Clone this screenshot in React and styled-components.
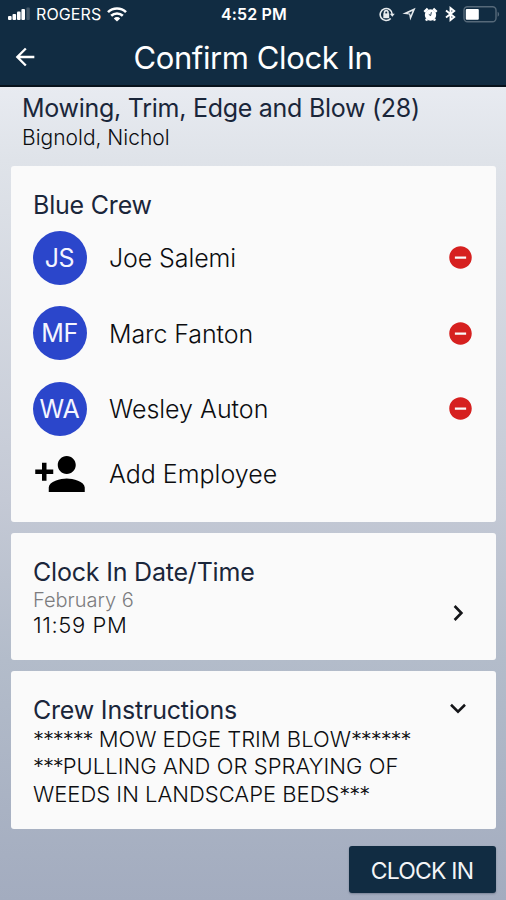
import React from "react";
import styled, { createGlobalStyle } from "styled-components";
import { MdArrowBack, MdPersonAdd, MdRemoveCircle } from "react-icons/md";

const GlobalStyle = createGlobalStyle`
  * {
    box-sizing: border-box;
  }
  body {
    margin: 0;
    font-family: Inter, "Liberation Sans", sans-serif;
  }
  h1, h2, p {
    margin: 0;
    font-weight: 400;
  }
`;

const Screen = styled.div`
  display: flex;
  flex-direction: column;
  height: 900px;
  overflow: hidden;
  background: linear-gradient(180deg, #e8ebf1 86px, #dfe3e9 160px, #c4c9d5 500px, #b3bcca 660px, #a3acbf 900px);
`;

const Header = styled.header`
  height: 87px;
  background-color: #112c42;
  border-bottom: 2px solid #07121c;
  color: #fff;
`;

const StatusBar = styled.div`
  display: grid;
  grid-template-columns: 1fr auto 1fr;
  align-items: center;
  height: 28px;
  padding: 0 6px 0 8px;
`;

const StatusGroup = styled.div`
  display: flex;
  align-items: center;
  justify-content: ${(props) => (props.$end ? "flex-end" : "flex-start")};
  gap: ${(props) => props.$gap};
`;

const StatusText = styled.span`
  font-size: 16px;
  line-height: 28px;
  font-weight: ${(props) => (props.$bold ? 600 : 400)};
  letter-spacing: ${(props) => props.$spacing || "0"};
  white-space: nowrap;
`;

const NavBar = styled.div`
  display: grid;
  grid-template-columns: 50px 1fr 50px;
  align-items: center;
  height: 58px;
`;

const BackButton = styled.button`
  display: flex;
  padding: 0 0 0 11px;
  border: 0;
  background: none;
  color: #fff;
  font-size: 28px;
`;

const PageTitle = styled.h1`
  padding-top: 2px;
  font-size: 31px;
  line-height: 40px;
  letter-spacing: -0.4px;
  text-align: center;
  white-space: nowrap;
`;

const Job = styled.div`
  height: 79px;
  padding: 6px 22px 0;
`;

const Heading = styled.h2`
  font-size: 25px;
  line-height: 31px;
  color: #1a263a;
  letter-spacing: ${(props) => props.$spacing || "-0.2px"};
  white-space: nowrap;
`;

const Line = styled.p`
  font-size: ${(props) => props.$size || "21px"};
  line-height: ${(props) => props.$height || "27px"};
  font-weight: 350;
  color: ${(props) => props.$color || "#0c0d10"};
  letter-spacing: ${(props) => props.$spacing || "0"};
  white-space: nowrap;
`;

const Stars = styled.span`
  letter-spacing: -1.1px;
`;

const Cards = styled.main`
  display: flex;
  flex-direction: column;
  gap: 11px;
  padding: 0 10px 0 11px;
`;

const Card = styled.section`
  height: ${(props) => props.$height};
  padding: 24px 22px 0;
  border-radius: 3px;
  background-color: #fafafa;
`;

const Row = styled.div`
  display: flex;
  align-items: center;
  height: ${(props) => props.$height || "75.5px"};
`;

const Crew = styled.div`
  margin-top: -1px;
`;

const Avatar = styled.div`
  width: 54px;
  height: 54px;
  padding-right: 1px;
  border-radius: 50%;
  background-color: #2b46cb;
  color: #f4f5ff;
  font-size: 25px;
  line-height: 55px;
  text-align: center;
  letter-spacing: -0.3px;
`;

const Name = styled.span`
  flex: 1;
  padding: 2px 0 0 22px;
  font-size: 25px;
  line-height: 31px;
  font-weight: 350;
  color: #0c0d10;
  letter-spacing: ${(props) => props.$spacing || "0"};
`;

const RemoveButton = styled.button`
  display: flex;
  padding: 0;
  border: 0;
  background: none;
  color: #d6201f;
  font-size: 27px;
`;

const AddIcon = styled(MdPersonAdd)`
  width: 54px;
  height: 54px;
  color: #000;
`;

const Split = styled.div`
  display: flex;
  align-items: ${(props) => props.$align || "center"};
  justify-content: space-between;
`;

const Footer = styled.footer`
  display: flex;
  justify-content: flex-end;
  padding: 17px 10px 0 0;
`;

const ClockInButton = styled.button`
  width: 147px;
  height: 47px;
  padding: 2px 1px 0 0;
  border: 0;
  border-radius: 3px;
  background-color: #112c42;
  box-shadow: 0 1px 2px rgba(20, 30, 50, 0.3);
  color: #f4f5f7;
  font-family: inherit;
  font-size: 23px;
  letter-spacing: -0.8px;
  white-space: nowrap;
`;

const crew = [
  { initials: "JS", name: "Joe Salemi", spacing: "-0.1px" },
  { initials: "MF", name: "Marc Fanton", spacing: "-0.1px" },
  { initials: "WA", name: "Wesley Auton", spacing: "0" },
];

const SignalIcon = () => (
  <svg width="22" height="14" viewBox="0 0 22 14" fill="#fff">
    <rect x="0" y="9" width="3.6" height="4" rx="1" />
    <rect x="4.5" y="7" width="3.6" height="6" rx="1" />
    <rect x="9" y="4.5" width="3.6" height="8.5" rx="1" />
    <rect x="13.4" y="2" width="3.6" height="11" rx="1" />
    <rect x="18.4" y="0.5" width="3.4" height="12.5" rx="1" opacity="0.22" />
  </svg>
);

const WifiIcon = () => (
  <svg width="20" height="15" viewBox="0 0 20 15" fill="none" stroke="#fff" strokeWidth="2.6">
    <path d="M1 5.2a12.8 12.8 0 0 1 18 0" />
    <path d="M4.2 8.8a8.3 8.3 0 0 1 11.6 0" />
    <path d="M6.8 11.4a4.6 4.6 0 0 1 6.4 0L10 14.6z" fill="#fff" stroke="none" />
  </svg>
);

// rotation lock: a lock inside a circular arrow
const LockIcon = () => (
  <svg width="16" height="15" viewBox="0 0 16 15" fill="none" stroke="#e6eaed" strokeWidth="1.6">
    <path d="M13.2 7.5a6 6 0 1 0-1.5 4" />
    <path d="M10.8 6.8h5l-2.5 3z" fill="#e6eaed" stroke="none" />
    <rect x="4.3" y="6.4" width="5.9" height="4.8" fill="#e6eaed" stroke="none" />
    <path d="M5.5 7V5.4a1.75 1.75 0 0 1 3.5 0V7" />
  </svg>
);

const LocationIcon = () => (
  <svg width="14" height="14" viewBox="0 0 14 14" fill="#e6eaed">
    <path d="M13.6.8 8.2 13.4 7.2 7.6.4 6.8z M10.4 4 5.8 6.2l2.4.4.5 2z" fillRule="evenodd" />
  </svg>
);

const AlarmIcon = () => (
  <svg width="15" height="15" viewBox="0 0 15 15">
    <circle cx="7.5" cy="8" r="5.7" fill="#fff" />
    <path d="M1.3 4.9 4.7 1.7M10.3 1.7l3.4 3.2M4 12l-1 1.6M11 12l1 1.6" stroke="#fff" strokeWidth="2.4" />
    <path d="M5.8 7.4l1.8 1.2.8-3.4" fill="none" stroke="#112c42" strokeWidth="0.9" />
  </svg>
);

const BluetoothIcon = () => (
  <svg width="11" height="16" viewBox="0 0 11 16" fill="none" stroke="#fff" strokeWidth="1.9">
    <path d="M1 4.4 9.2 11 5.5 14V2L9.2 5 1 11.6" />
  </svg>
);

const BatteryIcon = () => (
  <svg width="37" height="17" viewBox="0 0 37 17">
    <rect x="1" y="0.8" width="32" height="15" rx="3.5" fill="none" stroke="#566979" strokeWidth="1.4" />
    <rect x="2.8" y="3" width="13" height="10.8" rx="1" fill="#fff" />
    <path d="M34.6 5.8v5c2-.8 2-4.2 0-5z" fill="#566979" />
  </svg>
);

const Chevron = ({ down }) => (
  <svg width="18" height="18" viewBox="0 0 18 18" fill="none" stroke="#141518" strokeWidth="2.6">
    <path d={down ? "M2 4.8 9 11.6 16 4.8" : "M5.6 2 12.4 9 5.6 16"} />
  </svg>
);

const ChevronBox = styled.div`
  display: flex;
  width: 18px;
  margin-right: 7px;
  padding-top: ${(props) => props.$top || "0"};
`;

const App = () => {
  return (
    <Screen>
      <GlobalStyle />
      <Header>
        <StatusBar>
          <StatusGroup $gap="6px">
            <SignalIcon />
            <StatusText $spacing="0.1px">ROGERS</StatusText>
            <WifiIcon />
          </StatusGroup>
          <StatusText $bold $spacing="0.15px">4:52 PM</StatusText>
          <StatusGroup $end $gap="7px">
            <LockIcon />
            <LocationIcon />
            <AlarmIcon />
            <BluetoothIcon />
            <BatteryIcon />
          </StatusGroup>
        </StatusBar>
        <NavBar>
          <BackButton aria-label="Back">
            <MdArrowBack />
          </BackButton>
          <PageTitle>Confirm Clock In</PageTitle>
        </NavBar>
      </Header>

      <Job>
        <Heading $spacing="-0.27px">Mowing, Trim, Edge and Blow (28)</Heading>
        <Line>Bignold, Nichol</Line>
      </Job>

      <Cards>
        <Card $height="356px">
          <Heading>Blue Crew</Heading>
          <Crew>
            {crew.map((person) => (
              <Row key={person.initials}>
                <Avatar>{person.initials}</Avatar>
                <Name $spacing={person.spacing}>{person.name}</Name>
                <RemoveButton aria-label="Remove">
                  <MdRemoveCircle />
                </RemoveButton>
              </Row>
            ))}
            <Row $height="54px">
              <AddIcon />
              <Name>Add Employee</Name>
            </Row>
          </Crew>
        </Card>

        <Card $height="127px">
          <Split>
            <div>
              <Heading>Clock In Date/Time</Heading>
              <Line $size="20px" $color="#7c7c7e" $height="24px">
                February 6
              </Line>
              <Line $size="22px" $height="26px" $spacing="0.6px">
                11:59 PM
              </Line>
            </div>
            <ChevronBox $top="31px">
              <Chevron />
            </ChevronBox>
          </Split>
        </Card>

        <Card $height="158px">
          <Split $align="flex-start">
            <Heading>Crew Instructions</Heading>
            <ChevronBox $top="5px">
              <Chevron down />
            </ChevronBox>
          </Split>
          <Line $size="22px" $height="27.4px">
            <Stars>******</Stars> MOW EDGE TRIM BLOW<Stars>******</Stars>
          </Line>
          <Line $size="22px" $height="27.4px" $spacing="0.05px">
            <Stars>***</Stars>PULLING AND OR SPRAYING OF
          </Line>
          <Line $size="22px" $height="27.4px">
            WEEDS IN LANDSCAPE BEDS<Stars>***</Stars>
          </Line>
        </Card>
      </Cards>

      <Footer>
        <ClockInButton>CLOCK IN</ClockInButton>
      </Footer>
    </Screen>
  );
};

export default App;
